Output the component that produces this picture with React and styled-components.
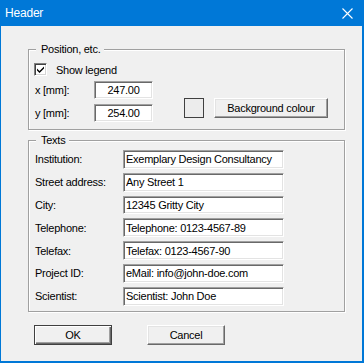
import React from 'react';
import styled, { createGlobalStyle } from 'styled-components';

const GlobalStyle = createGlobalStyle`
  html, body {
    margin: 0;
    padding: 0;
    background: #f0f0f0;
  }
  * {
    box-sizing: border-box;
  }
`;

const uiFont = `'Liberation Sans', Arial, sans-serif`;

const textRows = [
  { label: 'Institution:', value: 'Exemplary Design Consultancy' },
  { label: 'Street address:', value: 'Any Street 1' },
  { label: 'City:', value: '12345 Gritty City' },
  { label: 'Telephone:', value: 'Telephone: 0123-4567-89' },
  { label: 'Telefax:', value: 'Telefax: 0123-4567-90' },
  { label: 'Project ID:', value: 'eMail: info@john-doe.com' },
  { label: 'Scientist:', value: 'Scientist: John Doe' },
];

function CloseIcon() {
  return (
    <svg width="11" height="11" viewBox="0 0 11 11">
      <path d="M0.5 0.5 L10.5 10.5 M10.5 0.5 L0.5 10.5" stroke="#fff" strokeWidth="1.1" fill="none" />
    </svg>
  );
}

function CheckMark() {
  return (
    <svg width="9" height="9" viewBox="0 0 9 9">
      <path d="M1 3.5 L3.5 6 L8 1.5 L8 3.5 L3.5 8 L1 5.5 Z" fill="#000" />
    </svg>
  );
}

function Header() {
  return (
    <Window>
      <GlobalStyle />
      <TitleBar>
        <Title>Header</Title>
        <CloseButton>
          <CloseIcon />
        </CloseButton>
      </TitleBar>

      <Body>
        <GroupBox $height={81}>
          <Caption>Position, etc.</Caption>
          <PositionContent>
            <LeftColumn>
              <CheckRow>
                <CheckBox>
                  <CheckMark />
                </CheckBox>
                <Label>Show legend</Label>
              </CheckRow>
              <FieldRow $labelWidth={60}>
                <Label>x [mm]:</Label>
                <Field $width={59} readOnly value="247.00" $align="center" />
              </FieldRow>
              <FieldRow $labelWidth={60}>
                <Label>y [mm]:</Label>
                <Field $width={59} readOnly value="254.00" $align="center" />
              </FieldRow>
            </LeftColumn>
            <ColourPicker>
              <Swatch />
              <Button $width={114}>Background colour</Button>
            </ColourPicker>
          </PositionContent>
        </GroupBox>

        <GroupBox $height={172} $gap={10}>
          <Caption>Texts</Caption>
          <TextsGrid>
            {textRows.map((row) => (
              <React.Fragment key={row.label}>
                <Label>{row.label}</Label>
                <Field $width={161} readOnly value={row.value} />
              </React.Fragment>
            ))}
          </TextsGrid>
        </GroupBox>

        <ButtonRow>
          <Button $width={78} $default>OK</Button>
          <Button $width={78}>Cancel</Button>
        </ButtonRow>
      </Body>
    </Window>
  );
}

export default Header;

const Window = styled.div`
  width: 364px;
  height: 363px;
  display: flex;
  flex-direction: column;
  background: #f0f0f0;
  border-left: 1px solid #0078d7;
  border-right: 2px solid #0078d7;
  border-bottom: 2px solid #0078d7;
  font-family: ${uiFont};
  font-size: 11px;
  letter-spacing: -0.25px;
  color: #000;
`;

const TitleBar = styled.div`
  height: 26px;
  flex-shrink: 0;
  margin-left: -1px;
  margin-right: -2px;
  background: #0078d7;
  display: flex;
  align-items: center;
  justify-content: space-between;
  padding: 0 11px 0 5px;
`;

const Title = styled.span`
  color: #fff;
  font-size: 12px;
  letter-spacing: -0.2px;
`;

const CloseButton = styled.span`
  display: flex;
  align-items: center;
  padding-top: 1px;
`;

const Body = styled.div`
  display: flex;
  flex-direction: column;
  padding: 23px 0 0 27px;
`;

const GroupBox = styled.div`
  position: relative;
  width: 317px;
  height: ${(p) => p.$height}px;
  margin-top: ${(p) => p.$gap || 0}px;
  border: 1px solid #a0a0a0;
  box-shadow: inset 1px 1px 0 #fff, 1px 1px 0 #fff;
`;

const Caption = styled.span`
  position: absolute;
  top: -8px;
  left: 7px;
  padding: 0 4px 0 5px;
  background: #f0f0f0;
  line-height: 14px;
`;

const PositionContent = styled.div`
  display: flex;
  padding: 13px 0 0 5px;
`;

const LeftColumn = styled.div`
  display: flex;
  flex-direction: column;
  gap: 5px;
`;

const CheckRow = styled.div`
  display: flex;
  align-items: center;
  gap: 8px;
  height: 13px;
`;

const CheckBox = styled.span`
  width: 13px;
  height: 13px;
  display: flex;
  align-items: center;
  justify-content: center;
  background: #fff;
  border: 1px solid;
  border-color: #808080 #fff #fff #808080;
  box-shadow: inset 1px 1px 0 #404040, inset -1px -1px 0 #d4d4d4;
`;

const Label = styled.span`
  white-space: nowrap;
  padding-left: 1px;
`;

const FieldRow = styled.div`
  display: grid;
  grid-template-columns: ${(p) => p.$labelWidth}px auto;
  align-items: center;
  height: 18px;
`;

const Field = styled.input`
  width: ${(p) => p.$width}px;
  height: 100%;
  margin: 0;
  padding: 0 2px;
  background: #fff;
  font-family: ${uiFont};
  font-size: 11px;
  letter-spacing: -0.25px;
  color: #000;
  text-align: ${(p) => p.$align || 'left'};
  border: 1px solid;
  border-color: #a0a0a0 #fff #fff #a0a0a0;
  box-shadow: inset 1px 1px 0 #696969, inset -1px -1px 0 #e3e3e3;
  outline: none;
`;

const ColourPicker = styled.div`
  display: flex;
  gap: 10px;
  margin: 35px 0 0 31px;
  height: 20px;
`;

const Swatch = styled.span`
  width: 20px;
  height: 20px;
  background: #ececec;
  border: 1px solid #404040;
`;

const Button = styled.button`
  width: ${(p) => p.$width}px;
  height: 20px;
  margin: 0;
  padding: 0;
  background: #f0f0f0;
  font-family: ${uiFont};
  font-size: 11px;
  letter-spacing: -0.25px;
  color: #000;
  border: 1px solid;
  border-color: ${(p) => (p.$default ? '#404040' : '#fff #696969 #696969 #fff')};
  box-shadow: ${(p) =>
    p.$default
      ? 'inset 1px 1px 0 #fff, inset -1px -1px 0 #696969, inset -2px -2px 0 #a0a0a0'
      : 'inset -1px -1px 0 #a0a0a0, inset 1px 1px 0 #e3e3e3'};
`;

const TextsGrid = styled.div`
  display: grid;
  grid-template-columns: 89px auto;
  grid-auto-rows: 18.8px;
  row-gap: 4px;
  align-items: center;
  padding: 9px 0 0 5px;

  & > input {
    height: 18.8px;
  }
`;

const ButtonRow = styled.div`
  display: flex;
  gap: 35px;
  margin-top: 13px;
  padding-left: 6px;
`;
